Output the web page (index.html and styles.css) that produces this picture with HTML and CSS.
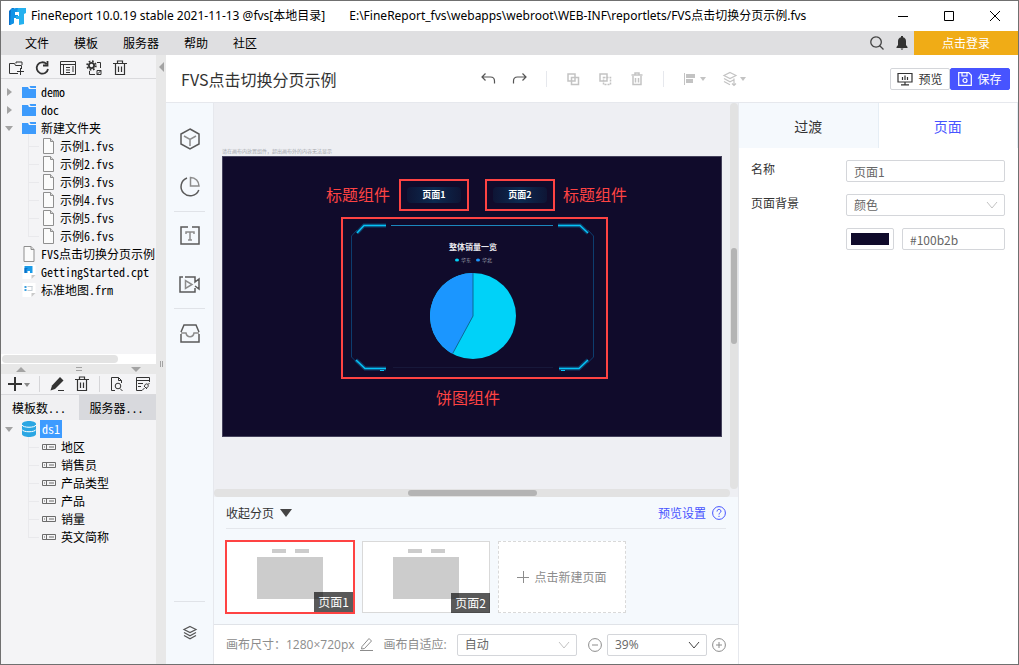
FILE: index.html
```
<!DOCTYPE html>
<html lang="zh-CN">

<head>
  <meta charset="UTF-8">
  <meta name="viewport" content="width=device-width, initial-scale=1.0">
  <title>FineReport</title>
  <link rel="stylesheet" href="styles.css">
</head>

<body>
  <!-- icones usados mais de uma vez -->
  <svg class="sprite" aria-hidden="true">
    <symbol id="folder" viewBox="0 0 14 12">
      <path fill="#3d9bfc" d="M0 1h6l1 2h7v9H0z" />
      <path fill="#3d9bfc" d="M7.5 0H14v2H8.5z" />
    </symbol>
    <symbol id="file" viewBox="0 0 13 16">
      <path fill="#fbfbfb" stroke="#8f8f8f" d="M1.5.5h7l3 3v12h-10z" />
      <path fill="#d8d8d8" stroke="#8f8f8f" d="M8.5.5v3h3" />
    </symbol>
    <symbol id="field" viewBox="0 0 14 6">
      <path fill="none" stroke="#6c6c6c" d="M.5.5h13v5H.5zM4.5.5v5M2 3h1M7 3h5" />
    </symbol>
    <symbol id="trash" viewBox="0 0 14 16">
      <path fill="none" stroke="currentColor" stroke-width="1.2" d="M0 3.500h14M4.500 3V1h5v2M2.500 4v10.500h9V4M5.500 6.500v5.500M8.500 6.500v5.500" />
    </symbol>
    <symbol id="chevron" viewBox="0 0 12 8">
      <path fill="none" stroke="currentColor" d="M1 1l5 6 5-6" />
    </symbol>
    <symbol id="caret" viewBox="0 0 6 4">
      <path class="solid" fill="currentColor" d="M0 0h6L3 4z" />
    </symbol>
    <symbol id="layers" viewBox="0 0 16 16">
      <path fill="none" stroke="currentColor" stroke-width="1.2" d="M8 1.500l6 3-6 3-6-3zM2 7.500l6 3.200 6-3.200M2 10.500l6 3.200 6-3.200" />
    </symbol>
  </svg>

  <header class="titlebar">
    <svg class="logo" width="17" height="17" viewBox="0 0 17 17">
      <path fill="#0a6fc8" d="M0 3l3-3h2v15l-4 2H0z" />
      <path fill="#1193e6" d="M2 1l5-1h6v4H6v3h3v3H5v5l-4 2z" />
      <path fill="#25b1ef" d="M9 0h8v5l-2 1v10l-5 1v-6H7V8h3V4H8z" />
    </svg>
    <span class="app">FineReport 10.0.19 stable 2021-11-13 @fvs[本地目录]</span>
    <span class="path">E:\FineReport_fvs\webapps\webroot\WEB-INF\reportlets/FVS点击切换分页示例.fvs</span>
    <div class="window-btns">
      <button aria-label="最小化"><svg width="10" height="10"><path d="M0 5.500h10" /></svg></button>
      <button aria-label="最大化"><svg width="10" height="10"><path d="M.5.5h9v9h-9z" /></svg></button>
      <button aria-label="关闭"><svg width="10" height="10"><path d="M0 0l10 10M10 0L0 10" /></svg></button>
    </div>
  </header>

  <nav class="menu">
    <a href="#">文件</a>
    <a href="#">模板</a>
    <a href="#">服务器</a>
    <a href="#">帮助</a>
    <a href="#">社区</a>
    <div class="menu-right">
      <button aria-label="搜索"><svg width="14" height="14" viewBox="0 0 14 14"><path fill="none" stroke="#444" stroke-width="1.3" d="M6 .8a5.200 5.200 0 1 0 .1 0M10 10l3.500 3.500" /></svg></button>
      <button aria-label="通知"><svg width="12" height="14" viewBox="0 0 12 14"><path fill="#333" d="M5 0h2v1.300c2 .4 3 2 3 4V9l1.500 2v1H.5v-1L2 9V5.300c0-2 1-3.600 3-4zM4.500 12.500h3L6 14z" /></svg></button>
      <button class="login">点击登录</button>
    </div>
  </nav>

  <main>
    <aside class="explorer">
      <div class="tools">
        <button aria-label="新建文件夹"><svg width="16" height="16" viewBox="0 0 16 16"><path d="M10 13.500H1.500v-10h5l1 2h6V9M8 3.500V2h6v3M9 11.500h7M12.500 8v7" /></svg></button>
        <button aria-label="刷新"><svg width="16" height="16" viewBox="0 0 16 16"><path stroke-width="1.8" d="M12.500 4A5.700 5.700 0 1 0 14 9M13.500 1v4.500H9" /></svg></button>
        <button aria-label="重命名"><svg width="16" height="16" viewBox="0 0 16 16"><path d="M.5 1.500h15v13H.5zM.5 4.500h15M3.500 4.500v10M6 7.500h4M6 10h4M6 12.500h4M13 6v6" /></svg></button>
        <button aria-label="设置"><svg width="16" height="16" viewBox="0 0 16 16"><circle cx="5.500" cy="5.500" r="2.600" stroke-width="1.8" /><circle cx="5.500" cy="5.500" r="4.300" stroke-width="1.8" stroke-dasharray="1.7 1.68" /><path d="M11 2.500h3.500V8M3.500 11v3.500H9M11 10.500h4v4h-4zM11 14.500l4-4" /></svg></button>
        <button aria-label="删除"><svg width="14" height="16"><use href="#trash" /></svg></button>
      </div>

      <ul class="tree">
        <li><i class="arrow"></i><svg width="14" height="12"><use href="#folder" /></svg><span>demo</span></li>
        <li><i class="arrow"></i><svg width="14" height="12"><use href="#folder" /></svg><span>doc</span></li>
        <li><i class="arrow open"></i><svg width="14" height="12"><use href="#folder" /></svg><span>新建文件夹</span></li>
        <li class="child"><svg width="13" height="16"><use href="#file" /></svg><span>示例1.fvs</span></li>
        <li class="child"><svg width="13" height="16"><use href="#file" /></svg><span>示例2.fvs</span></li>
        <li class="child"><svg width="13" height="16"><use href="#file" /></svg><span>示例3.fvs</span></li>
        <li class="child"><svg width="13" height="16"><use href="#file" /></svg><span>示例4.fvs</span></li>
        <li class="child"><svg width="13" height="16"><use href="#file" /></svg><span>示例5.fvs</span></li>
        <li class="child"><svg width="13" height="16"><use href="#file" /></svg><span>示例6.fvs</span></li>
        <li><i class="arrow none"></i><svg width="14" height="16" viewBox="0 0 13 16"><use href="#file" /></svg><span>FVS点击切换分页示例</span></li>
        <li><i class="arrow none"></i><svg width="14" height="14" viewBox="0 0 13 14"><path fill="#fff" d="M0 0h13v10l-4 4H0z" /><path fill="#c9c9c9" d="M9 14v-4h4z" /><path fill="#1a9be8" d="M2 1h8v7H7.500V6H5v2H2z" /><path fill="#0a6fc8" d="M2 3h3v1H4v4H2z" /></svg><span>GettingStarted.cpt</span></li>
        <li><i class="arrow none"></i><svg width="14" height="14" viewBox="0 0 13 14"><path fill="#fff" d="M0 0h13v10l-4 4H0z" /><path fill="#c9c9c9" d="M9 14v-4h4z" /><path fill="#3aa0e0" d="M2 3h2v2H2zM2 6h2v2H2z" /><path fill="none" stroke="#c4cdd4" d="M5 3.500h5M5 7.500h5M9.500 3v4" /></svg><span>标准地图.frm</span></li>
      </ul>

      <div class="hbar"></div>
      <div class="splitter"><i class="up"></i><i class="grip"></i><i class="down"></i></div>

      <div class="tools data-tools">
        <button class="add" aria-label="添加"><svg width="14" height="14" viewBox="0 0 14 14"><path stroke-width="2" d="M7 0v14M0 7h14" /></svg><svg class="caret" width="6" height="4"><use href="#caret" /></svg></button>
        <i class="sep"></i>
        <button aria-label="编辑"><svg width="14" height="14" viewBox="0 0 14 14"><path class="solid" d="M10 0l3.500 3.500-8.500 8.500-4.500 1.500L2 8.500z" /><path d="M8 13.500h6" /></svg></button>
        <button aria-label="删除"><svg width="14" height="16"><use href="#trash" /></svg></button>
        <i class="sep"></i>
        <button aria-label="预览"><svg width="14" height="14" viewBox="0 0 14 14"><path d="M5 13.500H1.500V.5h7l3 3V6M8.500.5v3h3M10 11.500l2.500 2.500" /><circle cx="8" cy="9" r="2.800" /></svg></button>
        <button aria-label="连接"><svg width="15" height="14" viewBox="0 0 15 14"><path d="M7 13.500H1.500V.5h13V5M1.500 3.500h13M3 6.500h5M3 9.500h3M7 13.500l2.500-2.500M9 9l3 3M9.500 9.500c0-2 1.500-3 3-2.500 1.500 1.500.5 4-1.500 4M13 7.500l1.500-1.500" /></svg></button>
      </div>

      <div class="tabs">
        <button class="active">模板数...</button>
        <button>服务器...</button>
      </div>

      <ul class="tree dataset">
        <li><i class="arrow open"></i><svg width="14" height="16" viewBox="0 0 14 16"><path fill="#2ba6e3" d="M0 3c0-4 14-4 14 0v10c0 4-14 4-14 0z" /><path fill="none" stroke="#fff" d="M0 4c1 3 13 3 14 0M0 8.500c1 3 13 3 14 0" /></svg><span class="selected">ds1</span></li>
        <li class="child"><svg width="14" height="6"><use href="#field" /></svg><span>地区</span></li>
        <li class="child"><svg width="14" height="6"><use href="#field" /></svg><span>销售员</span></li>
        <li class="child"><svg width="14" height="6"><use href="#field" /></svg><span>产品类型</span></li>
        <li class="child"><svg width="14" height="6"><use href="#field" /></svg><span>产品</span></li>
        <li class="child"><svg width="14" height="6"><use href="#field" /></svg><span>销量</span></li>
        <li class="child"><svg width="14" height="6"><use href="#field" /></svg><span>英文简称</span></li>
      </ul>
    </aside>

    <div class="divider"><i class="left"></i><i class="grip"></i></div>

    <section class="designer">
      <header class="topbar">
        <h1>FVS点击切换分页示例</h1>
        <div class="actions">
          <button class="on" aria-label="撤销"><svg width="16" height="16" viewBox="0 0 16 16"><path stroke-width="1.2" d="M5.500 2.500L2 6l3.500 3.500M2 6h8.500c3 0 4 1.500 4 4v2.500" /></svg></button>
          <button class="on" aria-label="重做"><svg width="16" height="16" viewBox="0 0 16 16"><path stroke-width="1.2" d="M10.500 2.500L14 6l-3.500 3.500M14 6H5.500c-3 0-4 1.500-4 4v2.500" /></svg></button>
          <i class="sep"></i>
          <button aria-label="复制"><svg width="16" height="16" viewBox="0 0 16 16"><path stroke-width="1.500" d="M3 3h7v7H3zM6.500 6.500h7v7h-7z" /></svg></button>
          <button aria-label="剪切"><svg width="16" height="16" viewBox="0 0 16 16"><path stroke-width="1.500" d="M3 3h7v7H3z" /><path stroke-width="1.500" stroke-dasharray="2 1" d="M6.500 6.500h7v7h-7z" /></svg></button>
          <button aria-label="删除"><svg width="16" height="16" viewBox="0 0 16 16"><path stroke-width="1.500" d="M2.500 4h11M6 3.500V2h4v1.500M4 5v8.500h8V5M6.500 7v4.500M9.500 7v4.500" /></svg></button>
          <i class="sep"></i>
          <button class="drop" aria-label="对齐"><svg width="16" height="16" viewBox="0 0 16 16"><path d="M2.500 2v12" /><path class="solid" d="M4 3h9v4H4zM4 8h7v4H4z" /></svg><svg width="6" height="4"><use href="#caret" /></svg></button>
          <button class="drop" aria-label="图层"><svg width="16" height="16" viewBox="0 0 16 16"><path stroke-width="1.2" d="M8 1.500l6 3-6 3-6-3zM2 7.500l6 3.200 4-2M2 10.500l6 3.200M12 7.500v7M10 12.500l2 2 2-2" /></svg><svg width="6" height="4"><use href="#caret" /></svg></button>
        </div>
        <div class="submit">
          <button class="preview"><svg width="16" height="14" viewBox="0 0 16 14"><path fill="none" stroke="#333" stroke-width="1.2" d="M1 1.500h14v8.500H1zM8 10v2.500M4 12.800h8M5.500 5v3M8 3.500v4.500M10.500 5v3" /></svg>预览</button>
          <button class="save"><svg width="14" height="14" viewBox="0 0 14 14"><path fill="none" stroke="#fff" stroke-width="1.2" d="M.7.700h10l2.600 2.600v10H.7zM4 1v3h5V1" /><circle cx="7" cy="8.500" r="2" fill="none" stroke="#fff" stroke-width="1.2" /></svg>保存</button>
        </div>
      </header>

      <div class="work">
        <nav class="widgets">
          <button aria-label="三维组件"><svg width="22" height="22" viewBox="0 0 22 22"><path d="M11 1l9 5v10l-9 5-9-5V6z" /><path class="light" d="M5 8l6 3.500L17 8M11 11.500V18" /></svg></button>
          <button aria-label="图表"><svg width="22" height="22" viewBox="0 0 22 22"><path d="M8 2a9.200 9.200 0 1 0 11.800 12" /><path class="light" d="M11.500 1.500c5 0 8.500 4 8.500 8.500h-8.500z" /></svg></button>
          <hr>
          <button aria-label="文本"><svg width="22" height="22" viewBox="0 0 22 22"><path d="M9 2H2v5M13 2h7v5M2 6v13h18V6" /><path class="light" d="M7 9V7h8v2M11 7v8M9 15h4" /></svg></button>
          <button aria-label="视频"><svg width="22" height="22" viewBox="0 0 22 22"><path d="M4 4H1v15h15v-4M6 4h10v5l4-3v10l-4-3" /><path class="light" d="M6.500 7.500v8l6.500-4z" /></svg></button>
          <hr>
          <button aria-label="素材"><svg width="22" height="22" viewBox="0 0 22 22"><path d="M2 12v8h18v-8M2 10l3-7h12l3 7" /><path class="light" d="M2 11h5c1 5 7 5 8 0h5" /></svg></button>
          <hr class="last">
          <button class="layer" aria-label="图层"><svg width="16" height="16"><use href="#layers" /></svg></button>
        </nav>

        <div class="center">
          <div class="stage">
            <div class="view">
              <p class="tip">请在画布内放置组件，超出画布外的内容无法显示</p>
              <div class="canvas">
                <span class="note note-left">标题组件</span>
                <div class="mark mark-1"><b>页面1</b></div>
                <div class="mark mark-2"><b>页面2</b></div>
                <span class="note note-right">标题组件</span>
                <div class="mark mark-pie">
                  <svg width="263" height="158" viewBox="0 0 263 158">
                    <g fill="none" stroke="#0d3d6e">
                      <path d="M14 11l-5.500 6v121l6 6M245 11l5.500 6v121l-6 6" />
                      <path stroke="#17183a" d="M50 148.500h160" />
                      <path stroke="#1c87bd" d="M48 6.500h162" />
                    </g>
                    <g fill="none" stroke="#0a6fa6" stroke-width="4" opacity=".5">
                      <path d="M14 14l7-7.500h22M215 6.500h22l8 7.500M13 141l9 8.500h21M216 149.500h20l9-8.500" />
                    </g>
                    <g fill="none" stroke="#06c3f6" stroke-width="1.500">
                      <path d="M14 14l7-7.500h22M215 6.500h22l8 7.500M13 141l9 8.500h21M216 149.500h20l9-8.500" />
                      <path stroke-width="1" d="M37 151.500h4M218 151.500h4" />
                    </g>
                    <text class="chart-title" x="130" y="31" text-anchor="middle">整体销量一览</text>
                    <ellipse cx="114" cy="41" rx="2" ry="1.500" fill="#00d2f8" />
                    <text class="legend" x="118" y="43">华东</text>
                    <ellipse cx="135" cy="41" rx="2" ry="1.500" fill="#1b96ff" />
                    <text class="legend" x="139" y="43">华北</text>
                    <circle cx="130" cy="97" r="43" fill="#00d2f8" />
                    <path fill="#1b96ff" d="M130 97V54a43 43 0 0 0-20.500 80.800z" />
                    <path fill="none" stroke="#0b6a95" d="M130 54v43l-20.500 37.800" />
                  </svg>
                </div>
                <span class="note note-bottom">饼图组件</span>
              </div>
            </div>
            <div class="vscroll"><i></i></div>
            <div class="hscroll"><i></i></div>
          </div>

          <div class="pages">
            <div class="pages-head">
              <button>收起分页 <svg width="12" height="8" viewBox="0 0 12 8"><path fill="#444" d="M0 0h12L6 8z" /></svg></button>
              <a href="#">预览设置 <svg width="14" height="14" viewBox="0 0 14 14"><circle cx="7" cy="7" r="6.400" fill="none" stroke="currentColor" /><path fill="none" stroke="currentColor" d="M5 5.500c0-3 4-2.500 4-.3C9 6.800 7 6.500 7 8.500M7 9.800v1.200" /></svg></a>
            </div>
            <div class="thumbs">
              <button class="thumb active"><svg width="68" height="54" viewBox="0 0 68 54"><path fill="#ccc" d="M16 0h14v4H16zM39 0h14v4H39zM1 8h66v42H1z" /></svg><span>页面1</span></button>
              <button class="thumb"><svg width="68" height="54" viewBox="0 0 68 54"><path fill="#ccc" d="M16 0h14v4H16zM39 0h14v4H39zM1 8h66v42H1z" /></svg><span>页面2</span></button>
              <button class="new"><svg width="12" height="12" viewBox="0 0 12 12"><path fill="none" stroke="#8c8c8c" d="M6.500 0v12M0 6.500h12" /></svg>点击新建页面</button>
            </div>
          </div>

          <footer>
            <span>画布尺寸：1280×720px</span>
            <button class="edit" aria-label="修改尺寸"><svg width="13" height="13" viewBox="0 0 13 13"><path fill="none" stroke="#8c8c8c" d="M2 8.500l7-8L11.500 3l-7 7.500-3 .5zM0 12.500h13" /></svg></button>
            <label for="fit">画布自适应:</label>
            <div class="select fit">
              <select id="fit"><option>自动</option></select>
              <svg width="12" height="8"><use href="#chevron" /></svg>
            </div>
            <button class="minus" aria-label="缩小"><svg width="14" height="14" viewBox="0 0 14 14"><circle cx="7" cy="7" r="6.400" fill="none" stroke="#8c8c8c" /><path stroke="#8c8c8c" d="M4 7h6" /></svg></button>
            <div class="select scale">
              <select aria-label="缩放"><option>39%</option></select>
              <svg width="12" height="8"><use href="#chevron" /></svg>
            </div>
            <button class="plus" aria-label="放大"><svg width="14" height="14" viewBox="0 0 14 14"><circle cx="7" cy="7" r="6.400" fill="none" stroke="#8c8c8c" /><path stroke="#8c8c8c" d="M4 7h6M7 4v6" /></svg></button>
          </footer>
        </div>

        <aside class="props">
          <div class="props-tabs">
            <button>过渡</button>
            <button class="active">页面</button>
          </div>
          <form>
            <label for="name">名称</label>
            <input type="text" id="name" value="页面1">
            <label for="background">页面背景</label>
            <div class="select">
              <select id="background"><option>颜色</option></select>
              <svg width="12" height="8"><use href="#chevron" /></svg>
            </div>
            <div class="color">
              <button type="button" class="swatch" aria-label="选择颜色"><i></i></button>
              <input type="text" aria-label="颜色值" value="#100b2b">
            </div>
          </form>
        </aside>
      </div>
    </section>
  </main>
</body>

</html>
```
FILE: styles.css
```
* {
  box-sizing: border-box;
}

body {
  display: flex;
  flex-direction: column;
  height: 100vh;
  margin: 0;
  border: 1px solid #707070;
  font-family: "Noto Sans CJK SC", sans-serif;
  font-size: 12px;
  line-height: 18px;
  color: #333;
  background-color: #fff;
  overflow: hidden;
}

button,
input,
select {
  margin: 0;
  padding: 0;
  border: none;
  background: none;
  font: inherit;
  color: inherit;
}

button {
  display: flex;
  align-items: center;
  justify-content: center;
}

a {
  color: inherit;
  text-decoration: none;
}

svg {
  display: block;
  flex: none;
}

.sprite {
  position: absolute;
  width: 0;
  height: 0;
}

/* barra de titulo */
.titlebar {
  display: flex;
  align-items: center;
  flex: none;
  height: 30px;
  padding-left: 8px;
  font-family: "Noto Sans", "Noto Sans CJK SC", sans-serif;
  color: #000;
  white-space: nowrap;
}

.app {
  margin-left: 5px;
}

.path {
  margin-left: 24px;
}

.window-btns {
  display: flex;
  margin-left: auto;
}

.window-btns button {
  width: 46px;
  height: 30px;
}

.window-btns path {
  fill: none;
  stroke: #000;
}

/* menu */
.menu {
  display: flex;
  align-items: center;
  flex: none;
  gap: 25px;
  height: 24px;
  padding-left: 24px;
  background-color: #dfdfe1;
  color: #000;
}

.menu-right {
  display: flex;
  align-self: stretch;
  gap: 12px;
  margin-left: auto;
}

.login {
  width: 104px;
  margin-left: -6px;
  background-color: #f0ac16;
  color: #fff;
}

main {
  display: flex;
  flex: 1;
  min-height: 0;
}

/* arvore de arquivos */
.explorer {
  display: flex;
  flex-direction: column;
  flex: none;
  width: 155px;
  background-color: #f4f4f6;
  color: #000;
}

.tools {
  display: flex;
  align-items: center;
  flex: none;
  gap: 10px;
  height: 24px;
  padding-left: 7px;
  padding-top: 2px;
  border-bottom: 1px solid #dadadd;
  color: #333;
}

.tools button {
  min-width: 16px;
}

.tools path,
.tools circle {
  fill: none;
  stroke: #333;
}

.tools .solid {
  fill: #333;
  stroke: none;
}

.data-tools {
  gap: 9px;
  height: 21px;
  padding-top: 0;
}

.data-tools .add {
  gap: 2px;
}

.data-tools .caret {
  color: #888;
}

.data-tools .caret,
.drop svg + svg {
  margin-top: 1px;
}

.sep {
  width: 1px;
  height: 16px;
  background-color: #d5d5d8;
}

.tree {
  flex: none;
  height: 275px;
  margin: 0;
  padding: 4px 0 0 4px;
  list-style: none;
  font-family: "Noto Sans Mono CJK SC", "Noto Sans CJK SC", monospace;
  white-space: nowrap;
  overflow: hidden;
}

.tree li {
  display: flex;
  align-items: center;
  height: 18px;
}

.tree span {
  margin-left: 4px;
}

.tree li > svg {
  position: relative;
  z-index: 1;
  margin-right: 1px;
}

.tree .child {
  position: relative;
  padding-left: 37px;
}

/* linhas guia */
.tree .child::before {
  content: "";
  position: absolute;
  left: 23px;
  top: -9px;
  width: 10px;
  height: 18px;
  border-left: 1px solid #e9e9ec;
  border-bottom: 1px solid #e9e9ec;
}

.arrow {
  width: 17px;
}

.arrow::before {
  content: "";
  display: block;
  width: 0;
  margin-left: 2px;
  border: 4px solid transparent;
  border-left: 5px solid #a3a3a3;
  border-right: none;
}

.arrow.open::before {
  margin-left: 0;
  border: 4px solid transparent;
  border-top: 5px solid #a3a3a3;
  border-bottom: none;
}

.arrow.none::before {
  visibility: hidden;
}

.dataset {
  flex: 1;
  padding-top: 0;
}

.tree .selected {
  margin-left: 3px;
  padding: 0 2px;
  background-color: #3d9bff;
  color: #fff;
}

.hbar {
  flex: none;
  height: 10px;
  padding: 1px;
  background-color: #fff;
}

.hbar::before {
  content: "";
  display: block;
  width: 116px;
  height: 8px;
  border-radius: 4px;
  background-color: #e3e3e3;
}

.splitter {
  display: flex;
  align-items: center;
  justify-content: space-between;
  flex: none;
  height: 10px;
  padding: 0 15px;
  background-color: #e8e8e8;
}

.splitter .up,
.splitter .down {
  border: 5px solid transparent;
  border-bottom: 5px solid #a3a3a3;
  border-top: none;
}

.splitter .down {
  border-top: 5px solid #a3a3a3;
  border-bottom: none;
}

.splitter .grip {
  width: 6px;
  height: 4px;
  border: solid #a3a3a3;
  border-width: 1px 0;
}

.tabs {
  display: flex;
  flex: none;
  height: 25px;
  font-family: "Noto Sans Mono CJK SC", "Noto Sans CJK SC", monospace;
}

.tabs button {
  flex: 1;
  justify-content: flex-start;
  padding-left: 11px;
  background-color: #d8d9dd;
}

.tabs .active {
  background-color: #f0f0f2;
}

.divider {
  display: flex;
  flex-direction: column;
  align-items: center;
  flex: none;
  width: 10px;
  padding-top: 7px;
  background-color: #e8e8e8;
}

.divider .left {
  border: 5px solid transparent;
  border-right: 5px solid #a3a3a3;
  border-left: none;
}

.divider .grip {
  width: 3px;
  height: 6px;
  margin-top: 289px;
  border: solid #a3a3a3;
  border-width: 0 1px;
}

/* editor */
.designer {
  display: flex;
  flex-direction: column;
  flex: 1;
  min-width: 0;
}

.topbar {
  display: flex;
  align-items: center;
  justify-content: space-between;
  flex: none;
  height: 48px;
  padding: 0 8px 0 15px;
  border-bottom: 1px solid #e6e8ed;
}

.topbar h1 {
  margin: 0;
  font-size: 16px;
  font-weight: 400;
  line-height: 24px;
}

.actions {
  display: flex;
  align-items: center;
  gap: 16px;
  color: #c3c3c3;
}

.actions path {
  fill: none;
  stroke: currentColor;
}

.actions .solid,
.drop .solid {
  fill: currentColor;
  stroke: none;
}

.actions .on {
  color: #555;
}

.actions .sep {
  margin: 0 2px;
  background-color: #e6e8ed;
}

.actions .drop {
  gap: 2px;
}

.submit {
  display: flex;
}

.submit button {
  gap: 5px;
  width: 60px;
  height: 22px;
  border: 1px solid #d4d6da;
  border-radius: 2px;
}

.submit .save {
  border-color: #4754ff;
  background-color: #4754ff;
  color: #fff;
}

.work {
  display: flex;
  flex: 1;
  min-height: 0;
}

.widgets {
  display: flex;
  flex-direction: column;
  flex: none;
  width: 48px;
  padding-top: 12px;
  border-right: 1px solid #e6e8ed;
  background-color: #f5f9fd;
  color: #555;
}

.widgets button {
  height: 48px;
}

.widgets path {
  fill: none;
  stroke: #5a5a5a;
  stroke-width: 1.5;
}

.widgets .light {
  stroke: #8c8c8c;
}

.widgets hr {
  width: 31px;
  margin: 0 8px;
  border: none;
  border-top: 1px solid #e0e3e8;
}

.widgets .last {
  margin-top: auto;
}

.widgets .layer {
  height: 62px;
}

.center {
  display: flex;
  flex-direction: column;
  flex: 1;
  min-width: 0;
}

.stage {
  display: grid;
  grid-template-columns: 1fr 8px;
  grid-template-rows: 1fr 8px;
  flex: 1;
  min-height: 0;
  background-color: #eeeff3;
}

.view {
  padding: 42px 8px 0;
  overflow: hidden;
}

.tip {
  margin: 0;
  font-size: 5px;
  line-height: 11px;
  color: #a5a7ab;
}

.canvas {
  position: relative;
  width: 500px;
  height: 281px;
  border: 1px solid #45425c;
  background-color: #100b2b;
}

.note {
  position: absolute;
  font-size: 16px;
  line-height: 24px;
  color: #fe4343;
}

.note-left {
  left: 103px;
  top: 25px;
}

.note-right {
  left: 340px;
  top: 25px;
}

.note-bottom {
  left: 213px;
  top: 228px;
}

.mark {
  position: absolute;
  display: flex;
  align-items: center;
  justify-content: center;
  border: 2px solid #fe4343;
}

.mark-1,
.mark-2 {
  top: 22px;
  width: 70px;
  height: 32px;
}

.mark-1 {
  left: 176px;
}

.mark-2 {
  left: 262px;
}

.mark-pie {
  left: 118px;
  top: 60px;
  width: 267px;
  height: 162px;
}

.mark b {
  width: 54px;
  border-radius: 4px;
  background: linear-gradient(90deg, #0e1535, #0c2a50, #0e1535);
  font-size: 9px;
  line-height: 16px;
  text-align: center;
  color: #fff;
}

.chart-title {
  font-size: 8px;
  font-weight: 700;
  fill: #e8e8ee;
}

.legend {
  font-size: 5px;
  fill: #a5a7b5;
}

.vscroll,
.hscroll {
  display: flex;
  align-items: center;
  justify-content: center;
  border-radius: 4px;
  background-color: #e2e2e2;
}

.vscroll i,
.hscroll i {
  width: 6px;
  height: 25%;
  border-radius: 3px;
  background-color: #b4b4b4;
}

.hscroll i {
  width: 25%;
  height: 6px;
}

/* paginas */
.pages {
  flex: none;
  height: 127px;
  padding: 0 12px;
  background-color: #f5f9fd;
}

.pages-head {
  display: flex;
  align-items: center;
  justify-content: space-between;
  height: 32px;
  border-bottom: 1px solid #e4e7ec;
}

.pages-head button,
.pages-head a {
  display: flex;
  align-items: center;
  gap: 6px;
}

.pages-head a {
  color: #4754ff;
}

.thumbs {
  display: flex;
  gap: 8px;
  padding-top: 12px;
}

.thumb,
.new {
  position: relative;
  width: 128px;
  height: 72px;
  border: 1px solid #d9d9d9;
  background-color: #fff;
}

.thumb svg {
  margin-top: -2px;
}

.thumb.active {
  outline: 2px solid #fe4343;
  outline-offset: -1px;
  border-color: #fe4343;
}

.thumb span {
  position: absolute;
  right: -1px;
  bottom: -1px;
  padding: 1px 4px;
  background-color: rgba(0, 0, 0, 0.65);
  color: #fff;
}

.thumb.active span {
  right: 0;
  bottom: 0;
}

.new {
  gap: 5px;
  border-style: dashed;
  color: #8c8c8c;
}

footer {
  display: flex;
  align-items: center;
  flex: none;
  height: 40px;
  padding: 0 12px;
  border-top: 1px solid #e0e3e8;
  font-family: "Open Sans", "Noto Sans CJK SC", sans-serif;
  color: #8c8c8c;
  white-space: nowrap;
}

.edit {
  margin: 0 11px 0 5px;
}

.select {
  display: grid;
  align-items: center;
  color: #c3c3c3;
}

.select select,
.select svg {
  grid-area: 1 / 1;
}

.select svg {
  justify-self: end;
  margin-right: 7px;
  pointer-events: none;
}

.select select,
.props input {
  width: 100%;
  height: 22px;
  padding: 0 7px;
  border: 1px solid #d4d6da;
  border-radius: 2px;
  background-color: #fff;
  color: #666;
  appearance: none;
}

.fit {
  flex: 1;
  margin: 0 11px 0 10px;
}

.scale {
  width: 100px;
  margin: 0 5px;
  color: #444;
}

/* propriedades */
.props {
  flex: none;
  width: 280px;
  border-left: 1px solid #e6e8ed;
}

.props-tabs {
  display: flex;
  height: 45px;
  border-right: 1px solid #e6eef5;
  font-size: 14px;
}

.props-tabs button {
  flex: 1;
  background-color: #f5f9fd;
}

.props-tabs .active {
  border-left: 1px solid #e6eef5;
  background-color: #fff;
  color: #4754ff;
}

.props form {
  display: grid;
  grid-template-columns: 95px 1fr;
  row-gap: 12px;
  padding: 12px 13px 0 12px;
}

.color {
  display: flex;
  grid-column: 2;
  gap: 8px;
}

.swatch {
  flex: none;
  width: 48px;
  height: 22px;
  border: 1px solid #d4d6da;
  border-radius: 2px;
}

.swatch i {
  width: 38px;
  height: 12px;
  background-color: #100b2b;
}
```
